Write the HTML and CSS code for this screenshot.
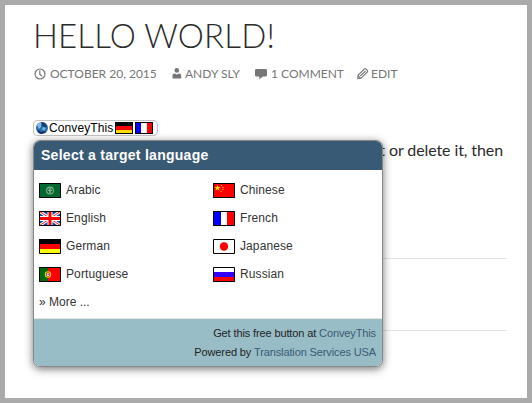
FILE: index.html
```html
<!DOCTYPE html>
<html lang="en">
<head>
<meta charset="utf-8">
<title>Hello world!</title>
<link rel="stylesheet" href="styles.css">
</head>
<body>
<article class="post">
  <h1 class="title">Hello world!</h1>
  <div class="meta">
    <span class="item date"><svg width="12" height="12" viewBox="0 0 12 12"><circle cx="6" cy="6" r="5" fill="none" stroke="#767676" stroke-width="1.2"/><path d="M5.8 2.5V6.2L8.2 8.3" fill="none" stroke="#767676" stroke-width="1.2"/></svg>October 20, 2015</span>
    <span class="item author"><svg width="10" height="12" viewBox="0 0 10 12"><circle cx="4.8" cy="2.4" r="2.3" fill="#767676"/><path d="M.5 10.5V7.6Q.5 5.4 2.6 5.4L4.8 6.4L7 5.4Q9.2 5.4 9.2 7.6V10.5Z" fill="#767676"/></svg>Andy Sly</span>
    <span class="item comments"><svg width="12" height="12" viewBox="0 0 12 12"><path d="M1.2 1H10.8Q12 1 12 2.2V7.3Q12 8.5 10.8 8.5H8L4.3 11.3V8.5H1.2Q0 8.5 0 7.3V2.2Q0 1 1.2 1Z" fill="#767676"/></svg>1 Comment</span>
    <span class="item edit"><svg width="12" height="12" viewBox="0 0 12 12"><path d="M1 7.3L7.3 1Q8.1.3 9.1 1.1L10.2 2.2Q11 3.2 10.3 4L4 10.3L.8 10.6ZM3.4 8L8.6 2.8M1 7.5L3.8 10.3" fill="none" stroke="#767676" stroke-width="1.1"/></svg>Edit</span>
  </div>
  <div class="button">
    <svg class="globe" width="12" height="12" viewBox="0 0 12 12"><circle cx="6" cy="6" r="6" fill="#236cad"/><path d="M1 3Q3 0 6 0L5 3L5 5L3 7L2 5Z" fill="#87b9df"/><path d="M5 0L9 1L11 5L8 5L6 3Z" fill="#153d6d"/><path d="M2 8L5 10L8 9L10 9Q8 12 5 12Q2 11 1 8Z" fill="#12335e"/><path d="M7 5L10 6L8 9L6 7Z" fill="#6fb2e4"/></svg>
    <span class="brand">ConveyThis</span>
    <svg class="mini" width="18" height="12" viewBox="0 0 18 12" shape-rendering="crispEdges"><path d="M0 0H18V12H0Z"/><path d="M1 4H17V8H1Z" fill="red"/><path d="M1 8H17V11H1Z" fill="#fd0"/></svg>
    <svg class="mini" width="18" height="12" viewBox="0 0 18 12" shape-rendering="crispEdges"><path d="M0 0H18V12H0Z"/><path d="M1 1H6V11H1Z" fill="#00f"/><path d="M6 1H12V11H6Z" fill="#fff"/><path d="M12 1H17V11H12Z" fill="red"/></svg>
    <section class="popup">
      <h2 class="head"><span>Select a target language</span></h2>
      <div class="languages">
        <div class="lang"><svg class="flag" viewBox="0 0 22 15"><path d="M0 0H22V15H0Z" fill="#006830"/><circle cx="11" cy="7.5" r="3.4" fill="none" stroke="#7caf8a" stroke-width="1.1"/><path d="M9.5 6H12.5M9 7.5H13M10 9H12M11 5V10" stroke="#a5c9a9" stroke-width=".7"/><path class="frame" d="M.5.5H21.5V14.5H.5Z"/></svg>Arabic</div>
        <div class="lang"><svg class="flag" viewBox="0 0 22 15"><path d="M0 0H22V15H0Z" fill="red"/><path d="M4.5 2L5.3 4L7.5 4L5.8 5.3L6.5 7.5L4.5 6.2L2.5 7.5L3.2 5.3L1.5 4L3.7 4Z" fill="#fe0"/><path d="M8 2h1v1h-1zM9.5 4h1v1h-1zM9.5 6h1v1h-1zM7.5 8h1v1h-1z" fill="#fe0"/><path class="frame" d="M.5.5H21.5V14.5H.5Z"/></svg>Chinese</div>
        <div class="lang"><svg class="flag" viewBox="0 0 22 15"><path d="M0 0H22V15H0Z" fill="#1546a0"/><path d="M0 0L22 15M22 0L0 15" stroke="#fff" stroke-width="3"/><path d="M0 0L22 15M22 0L0 15" stroke="#f01820" stroke-width="1"/><path d="M11 0V15M0 7.5H22" stroke="#fff" stroke-width="5"/><path d="M11 0V15M0 7.5H22" stroke="red" stroke-width="3"/><path class="frame" d="M.5.5H21.5V14.5H.5Z"/></svg>English</div>
        <div class="lang"><svg class="flag" viewBox="0 0 22 15"><path d="M0 0H8V15H0Z" fill="#00f"/><path d="M8 0H14V15H8Z" fill="#fff"/><path d="M14 0H22V15H14Z" fill="red"/><path class="frame" d="M.5.5H21.5V14.5H.5Z"/></svg>French</div>
        <div class="lang"><svg class="flag" viewBox="0 0 22 15"><path d="M0 0H22V5H0Z"/><path d="M0 5H22V10H0Z" fill="red"/><path d="M0 10H22V15H0Z" fill="#ff0"/><path class="frame" d="M.5.5H21.5V14.5H.5Z"/></svg>German</div>
        <div class="lang"><svg class="flag" viewBox="0 0 22 15"><path d="M0 0H22V15H0Z" fill="#fff"/><circle cx="11" cy="7.5" r="4.2" fill="red"/><path class="frame" d="M.5.5H21.5V14.5H.5Z"/></svg>Japanese</div>
        <div class="lang"><svg class="flag" viewBox="0 0 22 15"><path d="M0 0H9V15H0Z" fill="#006b0b"/><path d="M9 0H22V15H9Z" fill="red"/><circle cx="9" cy="7.5" r="2.6" fill="none" stroke="#dfd117" stroke-width="1.2"/><path d="M7.5 6H10.5V8.5L9 9.7L7.5 8.5Z" fill="#fff" stroke="#d21" stroke-width=".7"/><path d="M8.7 7h.8v1h-.8z" fill="#00a"/><path class="frame" d="M.5.5H21.5V14.5H.5Z"/></svg>Portuguese</div>
        <div class="lang"><svg class="flag" viewBox="0 0 22 15"><path d="M0 0H22V5H0Z" fill="#fff"/><path d="M0 5H22V10H0Z" fill="#30f"/><path d="M0 10H22V15H0Z" fill="red"/><path class="frame" d="M.5.5H21.5V14.5H.5Z"/></svg>Russian</div>
        <div class="more">» More ...</div>
      </div>
      <footer class="foot">
        <div class="credit free">Get this free button at <a>ConveyThis</a></div>
        <div class="credit">Powered by <a>Translation Services USA</a></div>
      </footer>
    </section>
  </div>
  <p class="body">t or delete it, then</p>
  <div class="rule first"></div>
  <div class="rule second"></div>
</article>
</body>
</html>
```
FILE: styles.css
```css
* { box-sizing: border-box; }
body { margin: 0; background: #fff; }
svg { display: block; flex: none; }
.post {
  width: 532px;
  height: 403px;
  border: 5px solid #aaa;
  padding: 11px 20px 0 28px;
  overflow: hidden;
  font-family: Lato, sans-serif;
  color: #2b2b2b;
}
.title {
  margin: 0;
  font-size: 33px;
  line-height: 38px;
  font-weight: 300;
  letter-spacing: .15px;
  text-transform: uppercase;
  white-space: nowrap;
}
.meta {
  display: flex;
  height: 18px;
  margin: 11px 0 0 1px;
  font-size: 12px;
  line-height: 18px;
  color: #767676;
  text-transform: uppercase;
  white-space: nowrap;
}
.item { display: flex; align-items: center; gap: 4px; }
.date { width: 138px; }
.author { width: 83px; gap: 3px; }
.comments { width: 102px; }
.edit { gap: 2px; }
.button {
  position: relative;
  display: flex;
  align-items: center;
  width: 125px;
  height: 16px;
  margin: 37px 0 0;
  padding: 0 2px;
  border: 1px solid #c4c4c4;
  border-radius: 4px;
  background: #fff;
  font: 12px/14px "Liberation Sans", sans-serif;
  color: #000;
}
.brand { width: 66px; margin-left: 1px; white-space: nowrap; letter-spacing: .1px; }
.mini + .mini { margin-left: 2px; }
.popup {
  position: absolute;
  left: -1px;
  top: 19px;
  width: 350px;
  height: 227px;
  border: 1px solid #888;
  border-radius: 7px;
  overflow: hidden;
  background: #fff;
  box-shadow: 0 2px 8px rgba(0,0,0,.55);
  font: 12px/14px "Liberation Sans", sans-serif;
  letter-spacing: .1px;
  color: #333;
}
.head {
  height: 29px;
  margin: 0;
  padding-left: 7px;
  background: #395a74;
  color: #fff;
  font-size: 14px;
  line-height: 29px;
  font-weight: bold;
  letter-spacing: .27px;
  white-space: nowrap;
}
.languages {
  display: grid;
  grid-template-columns: 174px 1fr;
  grid-auto-rows: 28px;
  height: 149px;
  padding: 6px 5px 0;
  border-bottom: 1px solid #e3e3e3;
}
.lang { display: flex; align-items: center; gap: 5px; }
.flag { width: 22px; height: 15px; }
.frame { fill: none; stroke: #000; stroke-width: 1; }
.more { line-height: 28px; letter-spacing: 0; }
.foot {
  height: 47px;
  padding: 5px 6px 0 0;
  background: #99bdc7;
  text-align: right;
  font-size: 11px;
  line-height: 19px;
  letter-spacing: -.12px;
  color: #222;
}
.foot a { color: #395a74; }
.body { margin: 2px 0 0; text-align: right; padding-right: 4px; font-size: 16px; line-height: 24px; letter-spacing: -.1px; }
.rule { height: 1px; margin-left: 1px; background: #e3e3e3; }
.first { margin-top: 96px; }
.second { margin-top: 71px; }
```
